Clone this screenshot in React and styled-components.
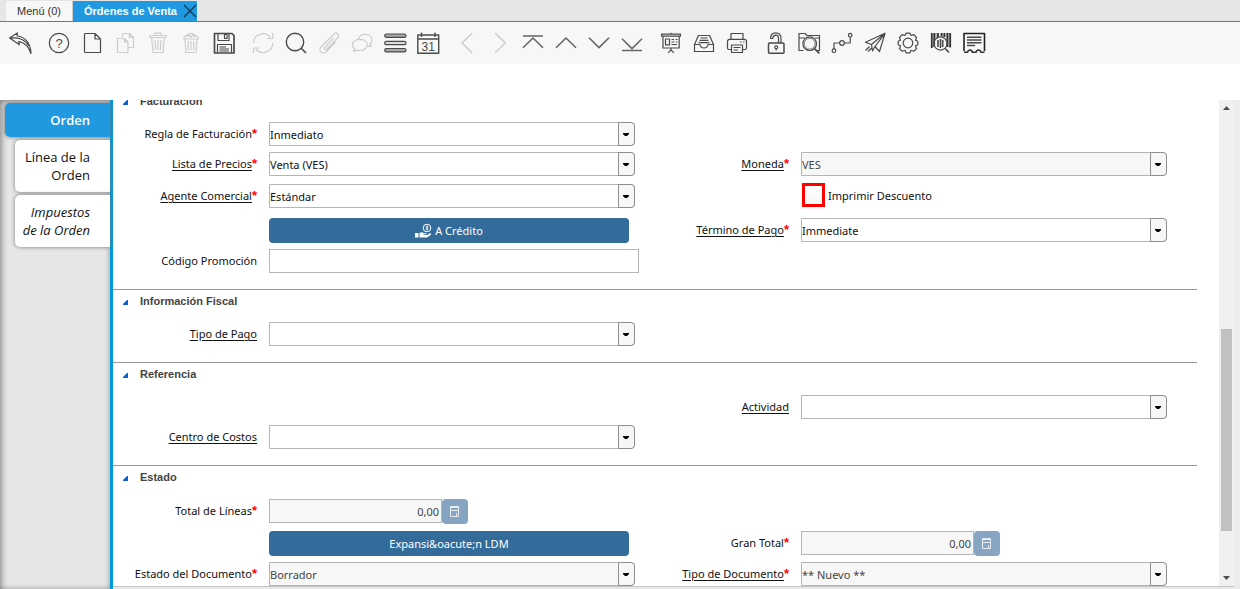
import React, { useState } from "react";
import styled, { createGlobalStyle, css } from "styled-components";

const GlobalStyle = createGlobalStyle`
  * {
    box-sizing: border-box;
  }
  body {
    margin: 0;
    background: #fff;
    color: #111;
    font-family: "Noto Sans", "Open Sans", sans-serif;
    font-size: 11px;
  }
  button, input, select {
    margin: 0;
    font: inherit;
  }
`;

const Page = styled.div`
  display: flex;
  flex-direction: column;
  height: 100vh;
  overflow: hidden;
`;

const TabBar = styled.nav`
  display: flex;
  align-items: flex-end;
  flex: none;
  height: 22px;
  padding-left: 6px;
  background: #e6e6e6;
  border-bottom: 1px solid #2f8fc4;
`;
const WindowTab = styled.div`
  display: flex;
  align-items: center;
  height: 20px;
  padding: 0 ${props => (props.$active ? "0 0 11px" : "11px")};
  background: ${props => (props.$active ? "#2199e0" : "#f7f7f7")};
  border-right: ${props => (props.$active ? "none" : "1px solid #ccc")};
`;
const TabTitle = styled.button`
  padding: 0;
  border: 0;
  background: none;
  font-family: "Liberation Sans", Arial, sans-serif;
  font-size: 11px;
  font-weight: ${props => (props.$active ? "bold" : "normal")};
  color: ${props => (props.$active ? "#fff" : "#333")};
`;
const CloseTab = styled.button`
  display: flex;
  padding: 0;
  margin-left: 6px;
  border: 0;
  background: none;
`;

const ToolBar = styled.div`
  display: flex;
  align-items: center;
  flex: none;
  gap: 6px;
  height: 42px;
  padding-left: 4px;
  background: #f7f7f7;
`;
const ToolGroup = styled.div`
  display: flex;
`;
const ToolButton = styled.button`
  display: flex;
  align-items: center;
  justify-content: center;
  width: 33px;
  height: 33px;
  padding: 0;
  border: 0;
  background: none;
  color: #4a4a4a;
  &:disabled {
    color: #cdcdcd;
  }
`;
const ToolIcon = styled.svg`
  width: 23px;
  height: 23px;
  fill: none;
  stroke: currentColor;
  stroke-width: 1.2;
  stroke-linejoin: round;
  text {
    fill: currentColor;
    stroke: none;
    text-anchor: middle;
    font-family: "Liberation Sans", Arial, sans-serif;
  }
`;

const Workspace = styled.div`
  display: flex;
  flex: 1;
  min-height: 0;
  margin-top: 36px;
`;

const Sidebar = styled.nav`
  display: flex;
  flex-direction: column;
  align-items: flex-end;
  flex: none;
  gap: 3px;
  width: 113px;
  padding-top: 3px;
  background: #e6e6e6;
  border-right: 3px solid #0099dc;
  box-shadow: inset 1px 1px 6px #777;
`;
const DetailTab = styled.button`
  width: ${props => (props.$active ? "105px" : "95px")};
  padding: 8px 20px 8px 4px;
  border: 0;
  border-radius: 5px 0 0 5px;
  box-shadow: 0 0 4px #777;
  background: ${props => (props.$active ? "#2199e0" : "#fff")};
  color: ${props => (props.$active ? "#fff" : "#111")};
  font-family: "Open Sans", "Noto Sans", sans-serif;
  font-size: 13px;
  font-weight: ${props => (props.$active ? "600" : "normal")};
  font-style: ${props => (props.$italic ? "italic" : "normal")};
  line-height: 18px;
  text-align: right;
`;

const Main = styled.main`
  flex: 1;
  min-width: 0;
  display: flex;
  flex-direction: column;
`;
const Viewport = styled.div`
  display: flex;
  flex: 1;
  min-height: 0;
  overflow: hidden;
`;
const BottomEdge = styled.div`
  flex: none;
  height: 3px;
  background: #e8e8e8;
  border-top: 1px solid #c4c4c4;
`;
const RightEdge = styled.div`
  flex: none;
  width: 6px;
  background: #ececec;
`;

const Form = styled.form`
  flex: 1;
  min-width: 0;
  margin-top: -11px;
  padding-right: 22px;
`;
const Section = styled.section`
  padding-bottom: 16px;
  border-top: 1px solid #999;
`;
const Heading = styled.h2`
  display: flex;
  align-items: center;
  gap: 12px;
  height: 22px;
  margin: 0 0 ${props => (props.$loose ? 11 : 10)}px;
  padding-left: 10px;
  color: #444;
  font-family: "Liberation Sans", Arial, sans-serif;
  font-size: 11px;
  font-weight: bold;
`;
const Fold = styled.svg`
  width: 5px;
  height: 5px;
  margin-top: 3px;
  fill: #0a62d0;
`;
const Row = styled.div`
  display: grid;
  grid-template-columns: 156px 1fr 156px 1fr;
  align-items: start;
  height: ${props => props.$height || 24}px;
  padding-right: 20px;
`;

const fieldBox = css`
  height: 24px;
  border: 1px solid #b5b5b5;
  border-radius: 0;
  background: #fff;
  color: #111;
  &:disabled {
    background: #f7f7f7;
    color: #444;
    opacity: 1;
  }
`;

const Label = styled.label`
  padding-right: 12px;
  line-height: 24px;
  text-align: right;
  white-space: nowrap;
  text-decoration: ${props => (props.$link ? "underline" : "none")};
  text-underline-offset: 2px;
`;
const Required = styled.span`
  display: inline-block;
  color: #f00;
  font-family: "Liberation Sans", Arial, sans-serif;
  font-size: 13px;
  font-weight: bold;
  line-height: 12px;
  text-decoration: none;
`;
const ComboBox = styled.div`
  display: grid;
  width: calc(100% - 10px);
`;
const Select = styled.select`
  ${fieldBox}
  grid-area: 1 / 1;
  appearance: none;
  width: 100%;
  padding: 1px 18px 0 0;
  border-radius: 0 4px 4px 0;
`;
const ComboArrow = styled.span`
  display: flex;
  align-items: center;
  justify-content: center;
  grid-area: 1 / 1;
  justify-self: end;
  width: 17px;
  height: 24px;
  border: 1px solid #8e8e8e;
  border-radius: 0 4px 4px 0;
  background: #f7f7f7;
  pointer-events: none;
`;
const TextInput = styled.input`
  ${fieldBox}
  width: calc(100% - 6px);
`;
const NumberField = styled.div`
  display: flex;
`;
const NumberInput = styled.input`
  ${fieldBox}
  width: 173px;
  padding: 1px 2px 0;
  text-align: right;
`;
const CalcButton = styled.button`
  display: flex;
  align-items: center;
  justify-content: center;
  width: 26px;
  height: 25px;
  padding: 0;
  border: 0;
  border-radius: 4px;
  background: #85a5c2;
`;
const ActionButton = styled.button`
  display: flex;
  align-items: center;
  justify-content: center;
  gap: 3px;
  width: calc(100% - 16px);
  height: 25px;
  padding: 0;
  border: 0;
  border-radius: 4px;
  background: #336b9b;
  color: #fff;
`;
const CheckLabel = styled.label`
  display: flex;
  align-items: center;
  gap: 3px;
  height: 22px;
  padding-left: 1px;
`;
const CheckBox = styled.input`
  appearance: none;
  width: 23px;
  height: 24px;
  border: 3px solid #f00;
  background: linear-gradient(#fff, #f7f7f7);
  &:checked {
    background: #336b9b;
  }
`;

const ScrollTrack = styled.div`
  display: flex;
  flex-direction: column;
  align-items: center;
  flex: none;
  width: 15px;
  background: #f0f0f0;
`;
const ScrollArrow = styled.svg`
  flex: none;
  width: 15px;
  height: 15px;
  fill: #4d4d4d;
`;
const ScrollSpace = styled.div`
  flex: ${props => props.$size} 0 0;
`;
const ScrollThumb = styled.div`
  flex: ${props => props.$size} 0 0;
  width: 11px;
  background: #c1c1c1;
`;

const toolGroups = [
  [
    {
      name: "Deshacer",
      icon: (
        <path d="M.6 6 8.3 .9V4C16 4.8 21.6 11 22 21.5 19.5 14 15.5 10.3 9.6 9.6L10.4 12.8ZM1.5 6.2C8 4.8 16 7 20 14" />
      ),
    },
  ],
  [
    {
      name: "Ayuda",
      icon: (
        <>
          <circle cx="11" cy="11" r="9.7" />
          <text x="11" y="15.5" fontSize="13">?</text>
        </>
      ),
    },
    {
      name: "Nuevo",
      icon: <path d="M4.5 1.5H14L19.5 7V20.5H4.5Q3.5 20.5 3.5 19.5V2.5Q3.5 1.5 4.5 1.5M14 1.5V7H19.5" />,
    },
    {
      name: "Copiar",
      off: true,
      icon: (
        <path d="M8.5 5.5V1.5H15.5L19.5 5.5V15.5H14M15.5 1.5V5.5H19.5M3.5 6.5H10.5L14 10V20.5H3.5ZM10.5 6.5V10H14" />
      ),
    },
    {
      name: "Eliminar",
      off: true,
      icon: (
        <path d="M3 3.5H19V5.5H3ZM8 3.5V1.2H14V3.5M4.7 5.5 6 20.5H16L17.3 5.5M8 8 8.6 18M11 8V18M14 8 13.4 18" />
      ),
    },
    {
      name: "Eliminar selección",
      off: true,
      icon: (
        <path d="M4 7V5L8 2.5Q11 0 14 2.5L18 5V7ZM5 7 6 20.5H16L17 7M8.3 9V18M11 9V18M13.7 9V18M7 5 9 3 11 5 13 3 15 5" />
      ),
    },
    {
      name: "Guardar",
      icon: (
        <>
          <path strokeWidth="1.7" d="M1.5 1.5H19L21 3.5V21H1.5Z" />
          <path d="M5 1.5V8.5H16V1.5M11.5 2.5H14V6.5H11.5ZM4.5 21V12.5H18.5V21M6.5 15H13M6.5 17H16M6.5 19H16" />
        </>
      ),
    },
  ],
  [
    {
      name: "Refrescar",
      off: true,
      icon: (
        <path d="M1.5 11A9.5 9.5 0 0 1 18.5 5.5M20.8 1V6.5H15M20.8 11A9.5 9.5 0 0 1 4 17M1.5 21V16H7" />
      ),
    },
    {
      name: "Buscar",
      icon: (
        <>
          <circle cx="10" cy="10" r="8.7" strokeWidth="1.4" />
          <path strokeWidth="1.6" d="M16.2 16.2 21 21" />
        </>
      ),
    },
    {
      name: "Anexos",
      off: true,
      icon: (
        <path d="M15.5 6 6.8 15.5C5.5 17 7.5 18.5 9 17L19.5 6C22.5 2.5 18.5-.5 15.5 2.5L3.5 14.5C-1 19 4.5 23 8.5 19.5L17.5 10" />
      ),
    },
    {
      name: "Chat",
      off: true,
      icon: (
        <path d="M2 18.8Q4 18.5 4.2 17.6C-.5 14 1 7.5 9 7.3 19 7.6 18.5 18.5 9 18.5Q7 18.5 6 18 4.5 19.5 2 18.8ZM7.5 7.2C8.5 .5 21 1 20.9 8 20.9 10 20 11.3 18.8 12.2Q19 14 20.5 14.2 17.5 15 16 13.4" />
      ),
    },
    {
      name: "Vista de lista",
      icon: (
        <>
          <rect x=".7" y="2" width="21.3" height="3.4" rx="1.7" fill="#aaa" />
          <rect x=".7" y="9.3" width="21.3" height="3.4" rx="1.7" fill="#ddd" />
          <rect x=".7" y="16.5" width="21.3" height="3.4" rx="1.7" fill="#aaa" />
        </>
      ),
    },
    {
      name: "Calendario",
      icon: (
        <>
          <path strokeWidth="1.4" d="M.8 3H21.7V21.3H.8ZM.8 7H21.7M4.5 .5V5M18 .5V5" />
          <text x="11.3" y="18.6" fontSize="12">31</text>
        </>
      ),
    },
  ],
  [
    { name: "Anterior", off: true, icon: <path strokeWidth="1.6" d="M16.3 1 6 11 16.3 21" /> },
    { name: "Siguiente", off: true, icon: <path strokeWidth="1.6" d="M6 1 16.3 11 6 21" /> },
    { name: "Primero", icon: <path stroke="#666" strokeWidth="1.6" d="M1 4H21M1 15.8 11 6 21 15.8" /> },
    { name: "Registro previo", icon: <path stroke="#666" strokeWidth="1.6" d="M1 15.8 11 6 21 15.8" /> },
    { name: "Registro próximo", icon: <path stroke="#666" strokeWidth="1.6" d="M1 5.8 11 15.6 21 5.8" /> },
    { name: "Último", icon: <path stroke="#666" strokeWidth="1.6" d="M1 6.8 11 16.6 21 6.8M1 18.5H21" /> },
  ],
  [
    {
      name: "Informe",
      icon: (
        <path d="M1.5 2.2H20.5V4.2H1.5ZM3 4.2V16H19.2V4.2M5.5 7H9.5V12.8H5.5ZM11.5 7.5H14M15.5 7.5H17.5M11.5 10H14.5M16 10H17.5M11.5 12.5H17M11 .8V2M11 16V18M8.2 20.8 11 17.8 13.8 20.8" />
      ),
    },
    {
      name: "Archivar",
      icon: (
        <path d="M1.5 12.5 5.5 3.5H16.5L20.5 12.5V19.5H1.5ZM1.5 12.5H7Q7.5 16 11 16 14.5 16 15 12.5H20.5M7.5 6H14.5M6.5 8.3H15.5M5.5 10.6H16.5" />
      ),
    },
    {
      name: "Imprimir",
      icon: (
        <path d="M5 7V1.5H17V7M5.5 17.5H3Q1.5 17.5 1.5 16V9.5Q1.5 7.3 3.5 7.3H18.5Q20.5 7.3 20.5 9.5V16Q20.5 17.5 19 17.5H16.5M5.5 13H16.5V20.5H5.5ZM7.5 15.5H14.5M7.5 18H12M14 10H15.5M17 10H18.5" />
      ),
    },
  ],
  [
    {
      name: "Bloquear",
      icon: (
        <>
          <rect x="3.5" y="11" width="15.5" height="10.3" rx="1" strokeWidth="1.5" />
          <path d="M5.5 6.5Q5.7 .8 10.5 .8 16 .8 16 6.5V11M13.5 11V6.5Q13.5 3.2 10.7 3.2 8 3.2 7.8 6.5H5.5" />
          <circle cx="11.2" cy="15.3" r="1.5" />
          <path d="M11.2 16.5V18.5" />
        </>
      ),
    },
    {
      name: "Zoom",
      icon: (
        <>
          <path d="M5.5 18.5H1V1.5H7L9 3.5H21.5V18.5H19M1 6H7M17 6H21.5" />
          <circle cx="11.7" cy="11.7" r="6.8" />
          <circle cx="11.7" cy="11.7" r="5.4" strokeWidth=".7" />
          <path strokeWidth="1.8" d="M16.8 16.8 21.3 21.3" />
        </>
      ),
    },
    {
      name: "Flujo de trabajo",
      icon: (
        <>
          <circle cx="3" cy="18.7" r="1.8" />
          <circle cx="11" cy="11" r="2.3" />
          <circle cx="19.2" cy="3.2" r="1.8" />
          <path d="M3 17V11H8.7M13.3 11H19.2V5" />
        </>
      ),
    },
    {
      name: "Solicitudes",
      icon: (
        <path d="M21 1.3 1.5 10.2 7.5 12.5 8.5 19 11 14.5 15.5 19.5ZM21 1.3 7.5 12.5M21 1.3 11 14.5M1.5 18.5 5.5 14.5M4 19.5 7.5 16" />
      ),
    },
    {
      name: "Proceso",
      icon: (
        <>
          <path d="M9 1.2H13L14 3.5 16.8 2.7 19.5 5.5 18.5 8.2 20.8 9.3V12.7L18.5 13.8 19.5 16.5 16.8 19.3 14 18.3 13 20.8H9L8 18.3 5.2 19.3 2.5 16.5 3.5 13.8 1.2 12.7V9.3L3.5 8.2 2.5 5.5 5.2 2.7 8 3.5Z" />
          <circle cx="11" cy="11" r="4.8" />
        </>
      ),
    },
    {
      name: "Información de producto",
      icon: (
        <>
          <path stroke="#333" strokeWidth="1.8" d="M1.8 1V16M4.2 1V15M8 1V5M11.5 1V4M14.5 1V5M17.3 1V15M20.2 1V15.5" />
          <path strokeWidth=".8" d="M6 1V6M19 1V15M13 1V5" />
          <circle cx="10.5" cy="11.5" r="6.6" />
          <path strokeWidth="1.6" d="M8 8V15M10.5 7V16M12.7 8V15M15.3 16.5 19 20.5" />
        </>
      ),
    },
    {
      name: "Contabilidad",
      icon: (
        <>
          <path stroke="#222" strokeWidth="1.6" d="M1 19V1.5H21.5V19" />
          <path strokeWidth="1.6" d="M4 5.2H18.5M4 8H18.5M4 10.7H18.5M4 13.5H12" />
          <path
            stroke="#333"
            strokeWidth="1.5"
            d="M1 20.3H4.5Q5 18 7 18 9 18 9.3 20.3H13Q13.5 18 15.5 18 17.5 18 18 20.3H21.5"
          />
        </>
      ),
    },
  ],
];

const FieldLabel = ({ id, text, link, required }) => (
  <Label htmlFor={id} $link={link}>
    {text}
    {required && <Required>*</Required>}
  </Label>
);

const Combo = ({ id, value = "", disabled }) => (
  <ComboBox>
    <Select id={id} defaultValue={value} disabled={disabled}>
      <option value={value}>{value}</option>
    </Select>
    <ComboArrow>
      <svg width="7" height="4" viewBox="0 0 7 4">
        <path d="M0 1H6V2L4 4H2L0 2Z" />
      </svg>
    </ComboArrow>
  </ComboBox>
);

const Amount = ({ id, value }) => (
  <NumberField>
    <NumberInput id={id} defaultValue={value} disabled />
    <CalcButton type="button" aria-label="Calculadora">
      <svg width="10" height="11" viewBox="0 0 10 11" fill="none" stroke="#e6edf3">
        <path d="M.5 .5H8.5V10.5H.5ZM1 1.5H8M1 4.5H8M6.5 7V10" />
      </svg>
    </CalcButton>
  </NumberField>
);

const Group = ({ title, loose, children }) => (
  <Section>
    <Heading $loose={loose}>
      <Fold viewBox="0 0 5 5">
        <path d="M5 0V5H0V4L4 0Z" />
      </Fold>
      {title}
    </Heading>
    {children}
  </Section>
);

const App = () => {
  const [printDiscount, setPrintDiscount] = useState(false);

  return (
    <Page>
      <GlobalStyle />
      <TabBar>
        <WindowTab>
          <TabTitle>Menú (0)</TabTitle>
        </WindowTab>
        <WindowTab $active>
          <TabTitle $active>Órdenes de Venta</TabTitle>
          <CloseTab aria-label="Cerrar">
            <svg width="14" height="14" viewBox="0 0 14 14" stroke="#12344a" strokeWidth="1.2">
              <path d="M1 1 13 13M13 1 1 13" />
            </svg>
          </CloseTab>
        </WindowTab>
      </TabBar>

      <ToolBar>
        {toolGroups.map(group => (
          <ToolGroup key={group[0].name}>
            {group.map(tool => (
              <ToolButton key={tool.name} aria-label={tool.name} disabled={tool.off}>
                <ToolIcon viewBox="0 0 23 23">{tool.icon}</ToolIcon>
              </ToolButton>
            ))}
          </ToolGroup>
        ))}
      </ToolBar>

      <Workspace>
        <Sidebar>
          <DetailTab $active>Orden</DetailTab>
          <DetailTab>Línea de la Orden</DetailTab>
          <DetailTab $italic>Impuestos de la Orden</DetailTab>
        </Sidebar>
        <Main>
          <Viewport>
            <Form>
              <Group title="Facturación">
                <Row $height={30}>
                  <FieldLabel id="invoiceRule" text="Regla de Facturación" required />
                  <Combo id="invoiceRule" value="Inmediato" />
                </Row>
                <Row $height={32}>
                  <FieldLabel id="priceList" text="Lista de Precios" link required />
                  <Combo id="priceList" value="Venta (VES)" />
                  <FieldLabel id="currency" text="Moneda" link required />
                  <Combo id="currency" value="VES" disabled />
                </Row>
                <Row $height={34}>
                  <FieldLabel id="salesRep" text="Agente Comercial" link required />
                  <Combo id="salesRep" value="Estándar" />
                  <span />
                  <CheckLabel>
                    <CheckBox
                      type="checkbox"
                      checked={printDiscount}
                      onChange={e => setPrintDiscount(e.target.checked)}
                    />
                    Imprimir Descuento
                  </CheckLabel>
                </Row>
                <Row $height={31}>
                  <span />
                  <ActionButton type="button">
                    <svg width="17" height="15" viewBox="0 0 17 15" fill="#fff">
                      <circle cx="12" cy="5" r="3.8" fill="none" stroke="#fff" />
                      <path d="M13.3 3.7Q10.7 2.8 10.9 4.3 13.5 5 13.2 6 12.5 7 10.7 6.2M12 2.5V7.5" fill="none" stroke="#fff" strokeWidth=".7" />
                      <path d="M0 10H3.5V14.5H0ZM4.5 10Q7 8.5 9 10.3H11.5V11.3H8.5V12H12L15.5 10Q17 10.3 15.5 12L12 14.5H4.5Z" />
                    </svg>
                    A Crédito
                  </ActionButton>
                  <FieldLabel id="paymentTerm" text="Término de Pago" link required />
                  <Combo id="paymentTerm" value="Immediate" />
                </Row>
                <Row>
                  <FieldLabel id="promoCode" text="Código Promoción" />
                  <TextInput id="promoCode" />
                </Row>
              </Group>

              <Group title="Información Fiscal">
                <Row>
                  <FieldLabel id="paymentType" text="Tipo de Pago" link />
                  <Combo id="paymentType" />
                </Row>
              </Group>

              <Group title="Referencia">
                <Row $height={30}>
                  <span />
                  <span />
                  <FieldLabel id="activity" text="Actividad" link />
                  <Combo id="activity" />
                </Row>
                <Row>
                  <FieldLabel id="costCenter" text="Centro de Costos" link />
                  <Combo id="costCenter" />
                </Row>
              </Group>

              <Group title="Estado" loose>
                <Row $height={32}>
                  <FieldLabel id="totalLines" text="Total de Líneas" required />
                  <Amount id="totalLines" value="0,00" />
                </Row>
                <Row $height={31}>
                  <span />
                  <ActionButton type="button">{"Expansi&oacute;n LDM"}</ActionButton>
                  <FieldLabel id="grandTotal" text="Gran Total" required />
                  <Amount id="grandTotal" value="0,00" />
                </Row>
                <Row>
                  <FieldLabel id="docStatus" text="Estado del Documento" required />
                  <Combo id="docStatus" value="Borrador" disabled />
                  <FieldLabel id="docType" text="Tipo de Documento" link required />
                  <Combo id="docType" value="** Nuevo **" disabled />
                </Row>
              </Group>
            </Form>
            <ScrollTrack>
              <ScrollArrow viewBox="0 0 15 15">
                <path d="M4 10 7.5 6 11 10Z" />
              </ScrollArrow>
              <ScrollSpace $size={214} />
              <ScrollThumb $size={202} />
              <ScrollSpace $size={40} />
              <ScrollArrow viewBox="0 0 15 15">
                <path d="M4 5 7.5 9 11 5Z" />
              </ScrollArrow>
            </ScrollTrack>
          </Viewport>
          <BottomEdge />
        </Main>
        <RightEdge />
      </Workspace>
    </Page>
  );
};

export default App;
